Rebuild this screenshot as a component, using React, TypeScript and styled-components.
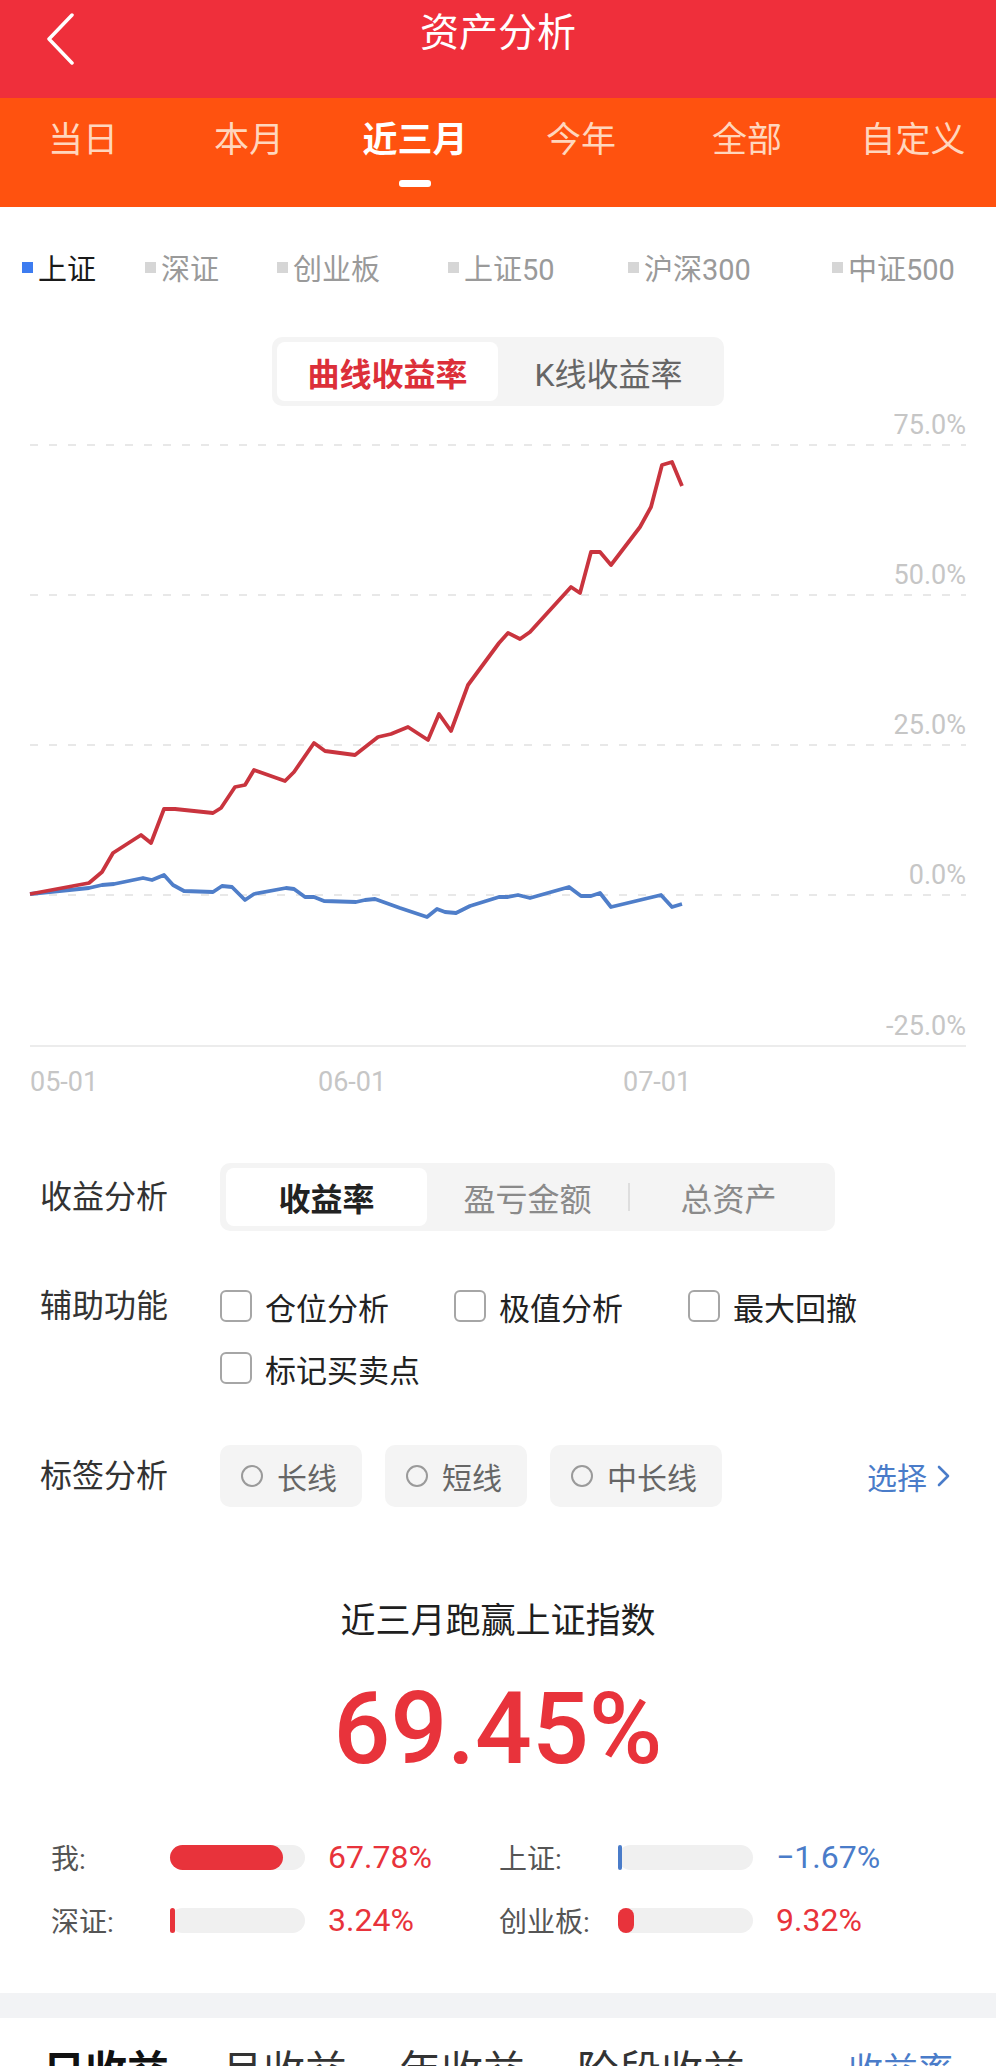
import React from 'react';
import styled, { createGlobalStyle } from 'styled-components';

const GlobalStyle = createGlobalStyle`
	html,
	body {
		margin: 0;
		padding: 0;
		background: #fff;
	}
	body {
		font-family: Roboto, "Noto Sans CJK SC", sans-serif;
		color: #222;
	}
`;

const Page = styled.div`
	width: 996px;
	height: 2066px;
	overflow: hidden;
`;

/* ---------- top bar ---------- */
const NavBar = styled.header`
	display: grid;
	grid-template-columns: 110px 1fr 110px;
	align-items: start;
	height: 98px;
	padding-top: 8px;
	box-sizing: border-box;
	background: #ef2f3b;
	color: #fff;
`;
const BackButton = styled.div`
	padding: 5px 0 0 45px;
	svg {
		display: block;
	}
`;
const Title = styled.h1`
	margin: 0;
	font-size: 39px;
	font-weight: 400;
	line-height: 50px;
	text-align: center;
`;

/* ---------- period tabs ---------- */
const PeriodBar = styled.nav`
	display: grid;
	grid-template-columns: repeat(6, 1fr);
	height: 109px;
	background: #ff520f;
`;
const PeriodTab = styled.div<{ $active?: boolean }>`
	display: flex;
	flex-direction: column;
	align-items: center;
	padding-top: 21px;
	font-size: 35px;
	line-height: 44px;
	font-weight: ${({ $active }) => ($active ? 700 : 400)};
	color: ${({ $active }) => ($active ? '#fff' : '#ffd6bd')};
	&::after {
		content: '';
		display: ${({ $active }) => ($active ? 'block' : 'none')};
		width: 32px;
		height: 7px;
		margin-top: 17px;
		border-radius: 3px;
		background: #fff;
	}
`;

/* ---------- index legend ---------- */
const Legend = styled.div`
	display: grid;
	grid-template-columns: 123px 132px 171px 180px 204px auto;
	padding: 40px 0 0 22px;
`;
const LegendItem = styled.div<{ $active?: boolean }>`
	display: flex;
	align-items: center;
	height: 40px;
	font-size: 29px;
	color: ${({ $active }) => ($active ? '#1a1a1a' : '#9a9a9a')};
	&::before {
		content: '';
		width: 11px;
		height: 11px;
		margin-right: 5px;
		background: ${({ $active }) => ($active ? '#3d7cf0' : '#d6d6d6')};
	}
`;

/* ---------- chart switch ---------- */
const Switch = styled.div`
	display: flex;
	width: 452px;
	height: 69px;
	margin: 50px auto 0;
	padding: 5px;
	box-sizing: border-box;
	border-radius: 10px;
	background: #f4f4f4;
`;
const SwitchItem = styled.div<{ $active?: boolean }>`
	flex: 1;
	display: flex;
	align-items: center;
	justify-content: center;
	border-radius: 8px;
	font-size: 32px;
	font-weight: ${({ $active }) => ($active ? 700 : 400)};
	color: ${({ $active }) => ($active ? '#dc2f39' : '#666')};
	background: ${({ $active }) => ($active ? '#fff' : 'transparent')};
`;

const ChartSvg = styled.svg`
	display: block;
	width: 996px;
	height: 704px;
	text {
		font-family: Roboto, sans-serif;
		fill: #c6c6c6;
	}
`;

/* ---------- analysis options ---------- */
const OptionRow = styled.div<{ $top: number; $align?: string }>`
	display: flex;
	align-items: ${({ $align }) => $align || 'center'};
	margin-top: ${({ $top }) => $top}px;
	padding: 0 45px 0 40px;
`;
const OptionLabel = styled.div`
	flex: 0 0 180px;
	font-size: 32px;
	line-height: 40px;
	color: #333;
`;
const Segment = styled.div`
	display: flex;
	width: 615px;
	height: 68px;
	padding: 5px 6px;
	box-sizing: border-box;
	border-radius: 10px;
	background: #f4f4f4;
`;
const SegmentItem = styled.div<{ $active?: boolean; $divider?: boolean }>`
	position: relative;
	flex: 1;
	display: flex;
	align-items: center;
	justify-content: center;
	border-radius: 8px;
	font-size: 32px;
	font-weight: ${({ $active }) => ($active ? 700 : 400)};
	color: ${({ $active }) => ($active ? '#222' : '#8a8a8a')};
	background: ${({ $active }) => ($active ? '#fff' : 'transparent')};
	&::before {
		content: '';
		display: ${({ $divider }) => ($divider ? 'block' : 'none')};
		position: absolute;
		left: 0;
		top: 15px;
		width: 2px;
		height: 28px;
		background: #dedede;
	}
`;
const CheckGrid = styled.div`
	display: grid;
	grid-template-columns: repeat(3, 234px);
	row-gap: 22px;
`;
const CheckItem = styled.label`
	display: flex;
	align-items: center;
	height: 40px;
	font-size: 31px;
	color: #222;
`;
const CheckBox = styled.span`
	width: 32px;
	height: 32px;
	margin-right: 13px;
	box-sizing: border-box;
	border: 2px solid #a6a6a6;
	border-radius: 6px;
`;
const Chips = styled.div`
	display: flex;
	gap: 23px;
`;
const Chip = styled.div`
	display: flex;
	align-items: center;
	height: 62px;
	padding: 0 25px 0 21px;
	border-radius: 10px;
	background: #f4f4f4;
	font-size: 30px;
	color: #666;
	&::before {
		content: '';
		width: 22px;
		height: 22px;
		margin-right: 14px;
		box-sizing: border-box;
		border: 2px solid #9a9a9a;
		border-radius: 50%;
	}
`;
const SelectLink = styled.div`
	display: flex;
	align-items: center;
	gap: 10px;
	margin-left: auto;
	font-size: 30px;
	color: #4a7cc9;
`;

/* ---------- summary ---------- */
const Headline = styled.div`
	margin-top: 91px;
	font-size: 35px;
	line-height: 48px;
	text-align: center;
	color: #1f1f1f;
`;
const BigRate = styled.div`
	margin-top: 33px;
	font-size: 100px;
	line-height: 100px;
	font-weight: 500;
	text-align: center;
	color: #e8333b;
`;
const Stats = styled.div`
	display: grid;
	grid-template-columns: 448px 1fr;
	row-gap: 23px;
	margin: 58px 0 53px;
	padding-left: 51px;
`;
const Stat = styled.div`
	display: grid;
	grid-template-columns: 119px 135px auto;
	align-items: center;
	height: 40px;
`;
const StatName = styled.span`
	font-size: 28px;
	color: #555;
`;
const Track = styled.div`
	height: 25px;
	border-radius: 13px;
	background: #f0f0f0;
`;
const Fill = styled.div<{ $color: string }>`
	height: 100%;
	border-radius: 13px;
	background: ${({ $color }) => $color};
`;
const StatValue = styled.span<{ $color: string }>`
	margin-left: 23px;
	font-size: 32px;
	color: ${({ $color }) => $color};
`;

const Band = styled.div`
	height: 25px;
	background: #f2f3f5;
`;
const RankTabs = styled.div`
	display: flex;
	align-items: flex-start;
	gap: 52px;
	height: 48px;
	padding: 32px 43px 0;
	box-sizing: border-box;
	overflow: hidden;
`;
const RankTab = styled.div<{ $active?: boolean }>`
	font-size: 42px;
	line-height: 44px;
	font-weight: ${({ $active }) => ($active ? 700 : 400)};
	color: ${({ $active }) => ($active ? '#111' : '#333')};
`;
const RankMore = styled.div`
	margin-left: auto;
	font-size: 35px;
	line-height: 44px;
	color: #4a7cc9;
`;

const periods = ['当日', '本月', '近三月', '今年', '全部', '自定义'];
const indexes = ['上证', '深证', '创业板', '上证50', '沪深300', '中证500'];

// page coords: 0% sits at y=895, 25% every 150px
const gridLines = [
	{ y: 445, label: '75.0%' },
	{ y: 595, label: '50.0%' },
	{ y: 745, label: '25.0%' },
	{ y: 895, label: '0.0%' },
];

const mine =
	'30,894 89,883 102,872 113,853 141,835 151,843 164,809 175,809 213,813 221,808 235,787 245,785 254,770 285,781 294,772 314,743 325,751 355,755 378,737 391,734 408,727 428,740 439,714 451,731 468,685 499,643 508,633 520,639 530,632 571,587 580,593 591,552 600,552 611,565 640,527 651,507 662,465 672,462 682,486';
const shIndex =
	'30,894 89,888 102,885 114,884 143,878 152,880 164,875 173,885 184,891 213,892 222,886 232,887 245,900 254,894 286,888 294,889 305,897 314,897 324,901 356,902 365,900 375,899 400,908 427,917 437,909 445,912 456,913 470,906 499,897 508,897 518,895 530,898 569,887 581,896 591,896 600,893 611,907 661,895 672,907 682,904';

const stats = [
	{ name: '我:', value: 67.78, color: '#e8333b', text: '67.78%' },
	{ name: '上证:', value: -1.67, color: '#4a7cc9', text: '−1.67%' },
	{ name: '深证:', value: 3.24, color: '#e8333b', text: '3.24%' },
	{ name: '创业板:', value: 9.32, color: '#e8333b', text: '9.32%' },
];
const maxStat = 67.78;

const Chart = () => (
	<ChartSvg viewBox="0 406 996 704">
		{gridLines.map((g) => (
			<g key={g.label}>
				<line x1={30} x2={966} y1={g.y} y2={g.y} stroke="#e8e8e8" strokeWidth={2} strokeDasharray="8 11" />
				<text x={966} y={g.y - 11} fontSize={27} textAnchor="end">
					{g.label}
				</text>
			</g>
		))}
		<line x1={30} x2={966} y1={1046} y2={1046} stroke="#ececec" strokeWidth={2} />
		<text x={966} y={1035} fontSize={27} textAnchor="end">
			-25.0%
		</text>
		<text x={30} y={1091} fontSize={27}>05-01</text>
		<text x={318} y={1091} fontSize={27}>06-01</text>
		<text x={623} y={1091} fontSize={27}>07-01</text>
		<polyline points={shIndex} fill="none" stroke="#4f7ec9" strokeWidth={3.8} strokeLinejoin="round" />
		<polyline points={mine} fill="none" stroke="#c9343e" strokeWidth={3.8} strokeLinejoin="round" />
	</ChartSvg>
);

const App: React.FunctionComponent = () => {
	return (
		<Page>
			<GlobalStyle />
			<NavBar>
				<BackButton>
					<svg width="30" height="52" viewBox="0 0 30 52">
						<path d="M27 2 L4 26 L27 50" fill="none" stroke="#fff" strokeWidth="3.5" strokeLinecap="round" strokeLinejoin="round" />
					</svg>
				</BackButton>
				<Title>资产分析</Title>
				<div />
			</NavBar>
			<PeriodBar>
				{periods.map((p) => (
					<PeriodTab key={p} $active={p === '近三月'}>
						{p}
					</PeriodTab>
				))}
			</PeriodBar>
			<Legend>
				{indexes.map((name, index) => (
					<LegendItem key={name} $active={index === 0}>
						{name}
					</LegendItem>
				))}
			</Legend>
			<Switch>
				<SwitchItem $active>曲线收益率</SwitchItem>
				<SwitchItem>K线收益率</SwitchItem>
			</Switch>
			<Chart />

			<OptionRow $top={53}>
				<OptionLabel>收益分析</OptionLabel>
				<Segment>
					<SegmentItem $active>收益率</SegmentItem>
					<SegmentItem>盈亏金额</SegmentItem>
					<SegmentItem $divider>总资产</SegmentItem>
				</Segment>
			</OptionRow>
			<OptionRow $top={55} $align="flex-start">
				<OptionLabel>辅助功能</OptionLabel>
				<CheckGrid>
					{['仓位分析', '极值分析', '最大回撤', '标记买卖点'].map((c) => (
						<CheckItem key={c}>
							<CheckBox />
							{c}
						</CheckItem>
					))}
				</CheckGrid>
			</OptionRow>
			<OptionRow $top={57}>
				<OptionLabel>标签分析</OptionLabel>
				<Chips>
					<Chip>长线</Chip>
					<Chip>短线</Chip>
					<Chip>中长线</Chip>
				</Chips>
				<SelectLink>
					选择
					<svg width="14" height="22" viewBox="0 0 14 22">
						<path d="M2 2 L11 11 L2 20" fill="none" stroke="#4a7cc9" strokeWidth="2.6" strokeLinecap="round" strokeLinejoin="round" />
					</svg>
				</SelectLink>
			</OptionRow>

			<Headline>近三月跑赢上证指数</Headline>
			<BigRate>69.45%</BigRate>
			<Stats>
				{stats.map((s) => (
					<Stat key={s.name}>
						<StatName>{s.name}</StatName>
						<Track>
							<Fill
								$color={s.color}
								style={{ width: Math.max(4, (Math.abs(s.value) / maxStat) * 113) }}
							/>
						</Track>
						<StatValue $color={s.color}>{s.text}</StatValue>
					</Stat>
				))}
			</Stats>
			<Band />
			<RankTabs>
				<RankTab $active>日收益</RankTab>
				<RankTab>月收益</RankTab>
				<RankTab>年收益</RankTab>
				<RankTab>阶段收益</RankTab>
				<RankMore>收益率</RankMore>
			</RankTabs>
		</Page>
	);
};

export default App;
